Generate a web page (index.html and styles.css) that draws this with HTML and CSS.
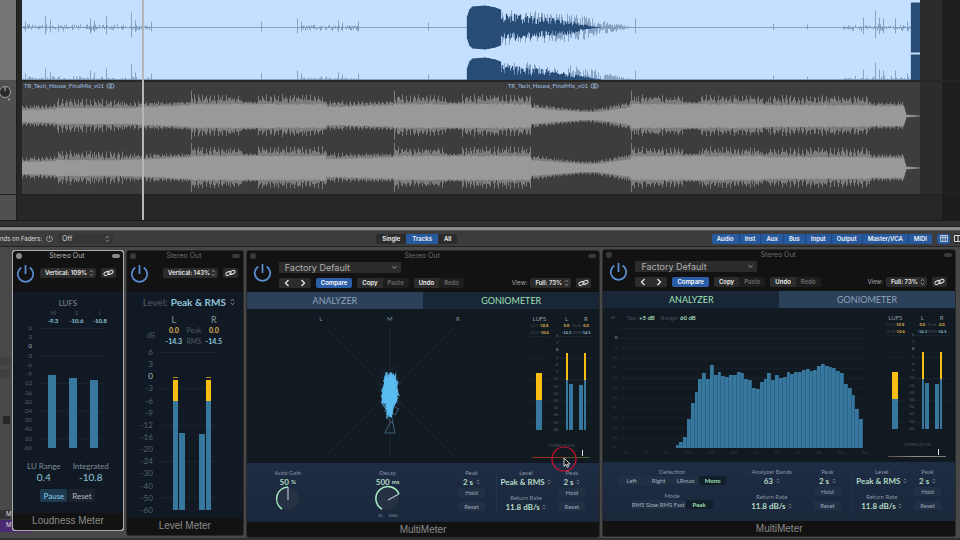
FILE: index.html
```
<!DOCTYPE html>
<html lang="en">
<head>
    <meta charset="UTF-8">
    <meta name="viewport" content="width=device-width, initial-scale=1.0">
    <title>Final Mix - Metering</title>
    <link rel="stylesheet" href="styles.css">
</head>
<body>
    <svg class="symbols" aria-hidden="true">
        <symbol id="power" viewBox="0 0 20 20">
            <path d="M5.6 3.6A8.2 8.2 0 1 0 14.4 3.6M10 1V10.5" fill="none" stroke="currentColor" stroke-width="1.8"/>
        </symbol>
        <symbol id="updown" viewBox="0 0 6 10">
            <path d="M1 4L3 1.5L5 4M1 6L3 8.5L5 6" fill="none" stroke="currentColor"/>
        </symbol>
        <symbol id="down" viewBox="0 0 8 6">
            <path d="M1.5 1.5L4 4L6.5 1.5" fill="none" stroke="currentColor"/>
        </symbol>
        <symbol id="link" viewBox="0 0 14 10">
            <rect x="1" y="3.6" width="7" height="4" rx="2" transform="rotate(-25 4.5 5.6)" fill="none" stroke="currentColor" stroke-width="1.2"/>
            <rect x="6" y="2.2" width="7" height="4" rx="2" transform="rotate(-25 9.5 4.2)" fill="none" stroke="currentColor" stroke-width="1.2"/>
        </symbol>
        <symbol id="stereo" viewBox="0 0 9 6">
            <circle cx="3.1" cy="3" r="2.2" fill="none" stroke="currentColor" stroke-width="0.8"/>
            <circle cx="5.9" cy="3" r="2.2" fill="none" stroke="currentColor" stroke-width="0.8"/>
        </symbol>
        <symbol id="prev" viewBox="0 0 6 8"><path d="M4.5 1L1.5 4L4.5 7" fill="none" stroke="currentColor" stroke-width="1.2"/></symbol>
        <symbol id="next" viewBox="0 0 6 8"><path d="M1.5 1L4.5 4L1.5 7" fill="none" stroke="currentColor" stroke-width="1.2"/></symbol>
    </svg>

    <!-- arrange area -->
    <section class="arrange">
        <div class="lane lane-selected">
            <div class="track-head"></div>
            <div class="region region-selected">
                <svg id="waveSelected" class="wave" viewBox="0 0 898 80" preserveAspectRatio="none"></svg>
            </div>
            <div class="lane-end"></div>
        </div>
        <div class="lane lane-mix">
            <div class="track-head">
                <svg class="pan" viewBox="0 0 12 16">
                    <circle cx="5" cy="7" r="5.5" fill="#2a2a2a" stroke="#a5a5a5"/>
                    <path d="M5 2V6" stroke="#bbb"/>
                    <circle cx="9" cy="14.5" r="1" fill="#aaa"/>
                </svg>
            </div>
            <div class="region region-mix">
                <div class="region-names">
                    <span>TR_Tech_House_FinalMix_v01 <svg class="stereo"><use href="#stereo"/></svg></span>
                    <span>TR_Tech_House_FinalMix_v01 <svg class="stereo"><use href="#stereo"/></svg></span>
                </div>
                <svg id="waveMix" class="wave" viewBox="0 0 898 104" preserveAspectRatio="none"></svg>
            </div>
            <div class="lane-end"></div>
        </div>
        <div class="lane lane-empty">
            <div class="track-head"></div>
            <div></div>
            <div class="lane-end"></div>
        </div>
        <div class="playhead"></div>
    </section>
    <div class="scrollbar"></div>
    <div class="splitter"></div>

    <!-- mixer toolbar -->
    <nav class="toolbar">
        <div class="faders">
            <label class="faders-label" for="sends">nds on Faders:</label>
            <svg class="mini-power"><use href="#power"/></svg>
            <span class="select sends">
                <select id="sends"><option>Off</option></select>
                <svg class="updown"><use href="#updown"/></svg>
            </span>
        </div>
        <div class="segment views">
            <button>Single</button><button class="on">Tracks</button><button>All</button>
        </div>
        <div class="filters">
            <div class="segment types">
                <button class="on">Audio</button><button class="on">Inst</button><button class="on">Aux</button><button class="on">Bus</button><button class="on">Input</button><button class="on">Output</button><button class="on">Master/VCA</button><button class="on">MIDI</button>
            </div>
            <button class="strip-view on" aria-label="Narrow strips">
                <svg viewBox="0 0 8 7"><path d="M.5 .5H7.5V6.5H.5ZM2.8 .5V6.5M5.2 .5V6.5M.5 2.5H7.5" fill="none" stroke="currentColor" stroke-width=".8"/></svg>
            </button>
            <button class="strip-view" aria-label="Wide strips">
                <svg viewBox="0 0 8 7"><path d="M.5 .5H7.5V6.5H.5ZM4 .5V6.5" fill="none" stroke="currentColor"/></svg>
            </button>
        </div>
    </nav>

    <main class="mixer">
        <div class="strip">
            <div class="slot"></div>
            <div class="slot"></div>
            <div class="slot slot-dark"></div>
            <div class="mute">M</div>
            <div class="strip-name">M</div>
        </div>

        <!-- Loudness Meter -->
        <article class="window active">
            <header class="titlebar"><i class="close"></i><h2>Stereo Out</h2><i class="pill"></i></header>
            <div class="head head-small">
                <button class="power" aria-label="Power"><svg><use href="#power"/></svg></button>
                <span class="select chip">
                    <select aria-label="Zoom"><option>Vertical: 109%</option></select>
                    <svg class="updown"><use href="#updown"/></svg>
                </span>
                <button class="link chip" aria-label="Link"><svg><use href="#link"/></svg></button>
            </div>
            <div class="screen loudness">
                <h3>LUFS</h3>
                <div class="readout">
                    <span>M<b>-9.3</b></span><span>S<b>-10.6</b></span><span>I<b>-10.8</b></span>
                </div>
                <div class="meter">
                    <ol class="scale" data-scale="meter"></ol>
                    <div class="plot">
                        <div class="bar" style="height: 61%"></div>
                        <div class="bar" style="height: 58%"></div>
                        <div class="bar" style="height: 57%"></div>
                    </div>
                </div>
                <div class="totals">
                    <span>LU Range<b>0.4</b></span><span>Integrated<b>-10.8</b></span>
                </div>
                <div class="actions">
                    <button class="on">Pause</button><button>Reset</button>
                </div>
            </div>
            <footer>Loudness Meter</footer>
        </article>

        <!-- Level Meter -->
        <article class="window">
            <header class="titlebar"><i class="close"></i><h2>Stereo Out</h2><i class="pill"></i></header>
            <div class="head head-small head-level">
                <button class="power" aria-label="Power"><svg><use href="#power"/></svg></button>
                <span class="select chip">
                    <select aria-label="Zoom"><option>Vertical: 143%</option></select>
                    <svg class="updown"><use href="#updown"/></svg>
                </span>
                <button class="link chip" aria-label="Link"><svg><use href="#link"/></svg></button>
            </div>
            <div class="screen level">
                <div class="level-mode">
                    <label for="levelMode">Level:</label>
                    <select id="levelMode"><option>Peak &amp; RMS</option></select>
                    <svg class="updown"><use href="#updown"/></svg>
                </div>
                <div class="level-values">
                    <span></span><h3>L</h3><span></span><h3>R</h3>
                    <span></span><b class="peak">0.0</b><span>Peak</span><b class="peak">0.0</b>
                    <span class="unit">dB</span><b>-14.3</b><span>RMS</span><b>-14.5</b>
                </div>
                <div class="meter">
                    <ol class="scale" data-scale="meter"></ol>
                    <div class="plot">
                        <div class="pair">
                            <div class="bar thin hold" style="height: 82%"><i class="hot" style="height: 16%"></i></div>
                            <div class="bar" style="height: 49%"></div>
                        </div>
                        <div class="pair">
                            <div class="bar" style="height: 48%"></div>
                            <div class="bar thin hold" style="height: 82%"><i class="hot" style="height: 16%"></i></div>
                        </div>
                    </div>
                </div>
            </div>
            <footer>Level Meter</footer>
        </article>

        <!-- MultiMeter, goniometer page -->
        <article class="window multi">
            <header class="titlebar"><i class="close"></i><h2>Stereo Out</h2><i class="pill"></i></header>
            <div class="head">
                <button class="power" aria-label="Power"><svg><use href="#power"/></svg></button>
                <div class="head-rows">
                    <span class="select preset">
                        <select aria-label="Preset"><option>Factory Default</option></select>
                        <svg class="down"><use href="#down"/></svg>
                    </span>
                    <div class="head-buttons">
                        <div class="segment steps"><button aria-label="Previous"><svg><use href="#prev"/></svg></button><button aria-label="Next"><svg><use href="#next"/></svg></button></div>
                        <button class="compare">Compare</button>
                        <div class="segment"><button>Copy</button><button disabled>Paste</button></div>
                        <div class="segment"><button>Undo</button><button disabled>Redo</button></div>
                        <label class="view" for="view1">View:</label>
                        <span class="select chip">
                            <select id="view1"><option>Full: 73%</option></select>
                            <svg class="updown"><use href="#updown"/></svg>
                        </span>
                        <button class="link chip" aria-label="Link"><svg><use href="#link"/></svg></button>
                    </div>
                </div>
            </div>
            <div class="tabs"><button>ANALYZER</button><button class="current">GONIOMETER</button></div>
            <div class="display">
                <svg id="gonio" class="gonio" viewBox="0 0 280 154">
                    <path class="axis" d="M78 19L206 147M206 19L78 147M142 19V147"/>
                    <text x="73" y="12">L</text><text x="142" y="12">M</text><text x="210" y="12">R</text>
                    <path class="tail" d="M136 103L141 95L151 100L147 106L141 101L137 103M143 112L137 124H147L144 108M139 108L146 116"/>
                </svg>
                <aside class="side">
                    <div class="side-head">
                        <h4>LUFS</h4><span></span><h4>L</h4><span></span><h4>R</h4>
                        <span>LU-I <b class="peak">-10.8</b></span><span></span><b class="peak">0.0</b><span>Peak</span><b class="peak">0.0</b>
                        <span>LU-S <b class="peak">-10.6</b></span><span></span><b>-14.3</b><span>RMS</span><b>-14.5</b>
                    </div>
                    <div class="meter">
                        <div class="plot"><div class="bar" style="height: 61%"><i class="hot" style="height: 47%"></i></div></div>
                        <ol class="scale" data-scale="meter"></ol>
                        <div class="plot">
                            <div class="pair">
                                <div class="bar thin" style="height: 82%"><i class="hot" style="height: 35%"></i></div>
                                <div class="bar" style="height: 49%"></div>
                            </div>
                            <div class="pair">
                                <div class="bar" style="height: 48%"></div>
                                <div class="bar thin" style="height: 82%"><i class="hot" style="height: 35%"></i></div>
                            </div>
                        </div>
                    </div>
                    <div class="correlation">CORRELATION<div class="track"><i></i></div></div>
                    <svg class="pointer" viewBox="0 0 26 26">
                        <circle cx="13" cy="13" r="12" fill="none" stroke="#c4122f" stroke-width="1.2"/>
                        <path d="M13 12V20.2L15 18.4L16.2 21.2L17.6 20.6L16.4 18H19Z" fill="#111" stroke="#fff" stroke-width=".8"/>
                    </svg>
                </aside>
            </div>
            <div class="controls">
                <div class="cell">
                    <label>Auto Gain</label><output>50 <small>%</small></output>
                    <svg class="knob" viewBox="0 0 28 28">
                        <circle cx="14" cy="14" r="11" fill="#263243"/>
                        <path d="M8 24A12 12 0 0 1 14 2" fill="none" stroke="#a5e8c0" stroke-width="1.6"/>
                        <path d="M14 2V15" stroke="#aebfc8" stroke-width="1.2"/>
                    </svg>
                </div>
                <div class="cell">
                    <label>Decay</label><output>500 <small>ms</small></output>
                    <svg class="knob" viewBox="0 0 28 28">
                        <circle cx="14" cy="14" r="11" fill="#263243"/>
                        <path d="M8 24A12 12 0 1 1 25 9" fill="none" stroke="#a5e8c0" stroke-width="1.6"/>
                        <path d="M14 15L25 9" stroke="#aebfc8" stroke-width="1.2"/>
                    </svg>
                    <span class="range"><i>10</i><i>1000</i></span>
                </div>
                <div class="cell">
                    <label for="peakA1">Peak</label>
                    <span class="value"><select id="peakA1"><option>2 s</option></select><svg class="updown"><use href="#updown"/></svg></span>
                    <button>Hold</button><button>Reset</button>
                </div>
                <div class="cell cell-line">
                    <label for="level1">Level</label>
                    <span class="value"><select id="level1"><option>Peak &amp; RMS</option></select><svg class="updown"><use href="#updown"/></svg></span>
                    <label class="second" for="rate1">Return Rate</label>
                    <span class="value"><select id="rate1"><option>11.8 dB/s</option></select><svg class="updown"><use href="#updown"/></svg></span>
                </div>
                <div class="cell">
                    <label for="peakB1">Peak</label>
                    <span class="value"><select id="peakB1"><option>2 s</option></select><svg class="updown"><use href="#updown"/></svg></span>
                    <button>Hold</button><button>Reset</button>
                </div>
            </div>
            <footer>MultiMeter</footer>
        </article>

        <!-- MultiMeter, analyzer page -->
        <article class="window multi raised">
            <header class="titlebar"><i class="close"></i><h2>Stereo Out</h2><i class="pill"></i></header>
            <div class="head">
                <button class="power" aria-label="Power"><svg><use href="#power"/></svg></button>
                <div class="head-rows">
                    <span class="select preset">
                        <select aria-label="Preset"><option>Factory Default</option></select>
                        <svg class="down"><use href="#down"/></svg>
                    </span>
                    <div class="head-buttons">
                        <div class="segment steps"><button aria-label="Previous"><svg><use href="#prev"/></svg></button><button aria-label="Next"><svg><use href="#next"/></svg></button></div>
                        <button class="compare">Compare</button>
                        <div class="segment"><button>Copy</button><button disabled>Paste</button></div>
                        <div class="segment"><button>Undo</button><button disabled>Redo</button></div>
                        <label class="view" for="view2">View:</label>
                        <span class="select chip">
                            <select id="view2"><option>Full: 73%</option></select>
                            <svg class="updown"><use href="#updown"/></svg>
                        </span>
                        <button class="link chip" aria-label="Link"><svg><use href="#link"/></svg></button>
                    </div>
                </div>
            </div>
            <div class="tabs"><button class="current">ANALYZER</button><button>GONIOMETER</button></div>
            <div class="display">
                <div class="analyzer">
                    <div class="analyzer-top"><i>dB</i><span>Top: <b>+5 dB</b></span><span>Range: <b>60 dB</b></span></div>
                    <div class="analyzer-plot">
                        <ol class="scale" data-scale="analyzer"></ol>
                        <div id="bands" class="bands"></div>
                    </div>
                    <div class="freqs"><i>16</i><i>31</i><i>63</i><i>125</i><i>250</i><i>500</i><i>1 k</i><i>2 k</i><i>4 k</i><i>8 k</i><i>16 k</i><i>20k</i></div>
                </div>
                <aside class="side">
                    <div class="side-head">
                        <h4>LUFS</h4><span></span><h4>L</h4><span></span><h4>R</h4>
                        <span>LU-I <b class="peak">-10.8</b></span><span></span><b class="peak">0.0</b><span>Peak</span><b class="peak">0.0</b>
                        <span>LU-S <b class="peak">-10.6</b></span><span></span><b>-14.3</b><span>RMS</span><b>-14.5</b>
                    </div>
                    <div class="meter">
                        <div class="plot"><div class="bar" style="height: 61%"><i class="hot" style="height: 47%"></i></div></div>
                        <ol class="scale" data-scale="meter"></ol>
                        <div class="plot">
                            <div class="pair">
                                <div class="bar thin" style="height: 82%"><i class="hot" style="height: 35%"></i></div>
                                <div class="bar" style="height: 49%"></div>
                            </div>
                            <div class="pair">
                                <div class="bar" style="height: 48%"></div>
                                <div class="bar thin" style="height: 82%"><i class="hot" style="height: 35%"></i></div>
                            </div>
                        </div>
                    </div>
                    <div class="correlation pale">CORRELATION<div class="track"><i></i></div></div>
                </aside>
            </div>
            <div class="controls controls-analyzer">
                <div class="cell">
                    <label>Detection</label>
                    <div class="choices"><button>Left</button><button>Right</button><button>LRmax</button><button class="on">Mono</button></div>
                    <label class="mode">Mode</label>
                    <div class="choices"><button>RMS Slow</button><button>RMS Fast</button><button class="on">Peak</button></div>
                </div>
                <div class="cell">
                    <label for="bandCount">Analyzer Bands</label>
                    <span class="value"><select id="bandCount"><option>63</option></select><svg class="updown"><use href="#updown"/></svg></span>
                    <label class="second" for="rateA">Return Rate</label>
                    <span class="value"><select id="rateA"><option>11.8 dB/s</option></select><svg class="updown"><use href="#updown"/></svg></span>
                </div>
                <div class="cell">
                    <label for="peakA2">Peak</label>
                    <span class="value"><select id="peakA2"><option>2 s</option></select><svg class="updown"><use href="#updown"/></svg></span>
                    <button>Hold</button><button>Reset</button>
                </div>
                <div class="cell cell-line">
                    <label for="level2">Level</label>
                    <span class="value"><select id="level2"><option>Peak &amp; RMS</option></select><svg class="updown"><use href="#updown"/></svg></span>
                    <label class="second" for="rate2">Return Rate</label>
                    <span class="value"><select id="rate2"><option>11.8 dB/s</option></select><svg class="updown"><use href="#updown"/></svg></span>
                </div>
                <div class="cell">
                    <label for="peakB2">Peak</label>
                    <span class="value"><select id="peakB2"><option>2 s</option></select><svg class="updown"><use href="#updown"/></svg></span>
                    <button>Hold</button><button>Reset</button>
                </div>
            </div>
            <footer>MultiMeter</footer>
        </article>
    </main>

    <script src="script.js"></script>
</body>
</html>
```
FILE: styles.css
```
* {
    box-sizing: border-box;
}
body {
    margin: 0;
    min-height: 100vh;
    display: flex;
    flex-direction: column;
    overflow-x: hidden;
    background-color: #2a2a2a;
    color: #ddd;
    font-family: Inter, "Liberation Sans", sans-serif;
    font-size: 7px;
    line-height: 8px;
}
h2, h3, h4, ol {
    margin: 0;
    padding: 0;
    font-size: inherit;
    font-weight: normal;
    list-style: none;
}
i {
    font-style: normal;
}
svg {
    display: block;
    flex: none;
}
button, select {
    margin: 0;
    padding: 0;
    border: 0;
    background: none;
    color: inherit;
    font: inherit;
    appearance: none;
}
.symbols {
    position: absolute;
    width: 0;
    height: 0;
}

/* arrange area */
.arrange {
    position: relative;
    background: #282828;
}
.lane {
    display: grid;
    grid-template-columns: 17px 1fr 40px;
    column-gap: 5px;
    margin-right: -5px;
}
.track-head {
    background: #505050;
    border-right: 1px solid #1c1c1c;
    overflow: hidden;
}
.lane-selected .track-head {
    background: #757575;
}
.lane-selected, .lane-mix {
    background: #262626;
}
.lane-end {
    margin-left: -5px;
    background: linear-gradient(90deg, #2c2c2c 49%, #1f1f1f 49%);
}
.lane-empty {
    height: 26px;
    border-top: 1px solid #202020;
    background: #272727;
}
.lane-empty .lane-end {
    background: linear-gradient(90deg, #272727 49%, #1d1d1d 49%);
}
.lane-mix {
    padding-top: 2px;
}
.lane-mix .track-head {
    margin-top: -2px;
}
.region {
    overflow: hidden;
}
.region-selected {
    background: #c4dfff;
}
.region-mix {
    background: #3d3d3d;
}
.region-names {
    display: grid;
    grid-template-columns: 54% 46%;
    height: 8px;
    padding-left: 2px;
    color: #9dbfe4;
    font-family: Lato, sans-serif;
    font-size: 6px;
}
.region-names span {
    display: flex;
    align-items: center;
    gap: 2px;
}
.stereo {
    width: 9px;
    height: 6px;
}
.wave {
    width: 100%;
}
#waveSelected {
    height: 80px;
}
#waveMix {
    height: 104px;
}
.pan {
    width: 12px;
    height: 16px;
    margin-top: 5px;
}
.playhead {
    position: absolute;
    top: 0;
    bottom: 0;
    left: 14.8%;
    width: 2px;
    background: #b4b6b8;
}
.scrollbar {
    height: 7px;
    background: #303030;
    border-top: 1px solid #1c1c1c;
    border-bottom: 1px solid #1c1c1c;
}
.splitter {
    height: 4px;
    border-bottom: 1px solid #555;
    background: #8a8a8a;
}

/* toolbar */
.toolbar {
    display: grid;
    grid-template-columns: 39.2% auto 1fr;
    align-items: center;
    height: 16px;
    background: #3c3c3c;
    border-bottom: 1px solid #232323;
    overflow: hidden;
}
.faders, .filters {
    display: flex;
    align-items: center;
}
.faders-label {
    font-size: 6px;
    white-space: nowrap;
}
.mini-power {
    width: 7px;
    height: 7px;
    margin: 0 5px 0 4px;
}
.select {
    display: flex;
    align-items: center;
}
.select select {
    flex: 1;
    min-width: 0;
}
.updown {
    width: 5px;
    height: 8px;
    color: #999;
}
.sends {
    width: 55px;
    height: 10px;
    padding: 0 3px 0 4px;
    background: #353535;
}
.segment {
    display: flex;
    border-radius: 2px;
    overflow: hidden;
}
.segment button {
    height: 10px;
    padding: 0 5px;
    background: #2c2c2c;
    color: #f2f2f2;
    font-size: 6px;
    font-weight: 600;
}
.segment button.on {
    background: #27599f;
}
.views button {
    padding: 0 6px;
}
.filters {
    justify-content: flex-end;
    gap: 5px;
    margin-right: -2px;
}
.types button + button {
    border-left: 1px solid #1d4580;
}
.strip-view {
    display: grid;
    place-items: center;
    width: 13px;
    height: 10px;
    border-radius: 2px;
    background: #2c2c2c;
    color: #ddd;
}
.strip-view svg {
    width: 8px;
    height: 7px;
}
.strip-view.on {
    background: #27599f;
}
.filters .strip-view:last-child {
    width: 8px;
    margin-left: -1px;
}

/* mixer with floating plug-in windows */
.mixer {
    flex: 1;
    display: grid;
    grid-template-columns: 10px 112fr 118fr 355fr 354fr;
    column-gap: 2px;
    align-items: start;
    padding: 3px 4px 0 0;
    background: #484848;
    border-bottom: 2px solid #303030;
}
.strip {
    padding-top: 107px;
}
.slot {
    height: 9px;
    margin-bottom: 3px;
    background: #404040;
}
.slot-dark {
    height: 8px;
    margin: 38px 0 86px 3px;
    background: #262626;
}
.mute {
    height: 9px;
    padding-left: 6px;
    background: #333;
    font-size: 6px;
    white-space: nowrap;
}
.strip-name {
    width: 32px;
    height: 12px;
    margin-top: 1px;
    padding-left: 6px;
    background: #4b2a73;
    font-size: 6px;
    line-height: 10px;
}
.window {
    position: relative;
    min-width: 0;
    border: 1px solid #2a2a2a;
    border-radius: 3px;
    overflow: hidden;
    background: #121212;
    color: #7f8a94;
}
.window.active {
    border: 1px solid #fff;
    outline: 1px solid #aaa;
    outline-offset: -1px;
}
.window.raised {
    margin-top: -1px;
}
.titlebar {
    display: flex;
    align-items: center;
    justify-content: space-between;
    height: 10px;
    padding: 0 3px;
    color: #6d6d6d;
    font-size: 7px;
}
.active .titlebar {
    color: #b5b5b5;
}
.close {
    width: 6px;
    height: 6px;
    border-radius: 3px;
    background: #3b3b3b;
}
.pill {
    width: 8px;
    height: 4px;
    border-radius: 2px;
    background: #3b3b3b;
}
.active .close, .active .pill {
    background: #8b8b8b;
}
.head {
    display: flex;
    align-items: flex-start;
    gap: 7px;
    height: 31px;
    padding: 1px 8px 0 6px;
}
.power {
    color: #5b8fd6;
}
.power svg {
    width: 19px;
    height: 19px;
}
.head .power {
    margin-top: 1px;
}
.head-small {
    align-items: flex-start;
    gap: 5px;
    padding: 2px 7px 0 3px;
}
.head-small .chip {
    margin-top: 5px;
}
.head-small .select {
    flex: 1;
}
.head-level .select {
    margin-left: 9px;
}
.chip {
    height: 10px;
    padding: 0 2px 0 5px;
    border-radius: 2px;
    background: #2b2b2b;
    color: #e8e8e8;
    font-size: 6px;
    font-weight: 600;
}
.link {
    width: 15px;
    padding: 0 2px;
}
.link svg {
    width: 11px;
    height: 8px;
}
.head-rows {
    flex: 1;
    display: flex;
    flex-direction: column;
    gap: 5px;
}
.preset {
    width: 39%;
    height: 11px;
    padding: 0 3px 0 6px;
    border-radius: 1px;
    background: #2c2c2c;
    color: #b0b0b0;
    font-size: 9px;
    line-height: 11px;
}
.down {
    width: 7px;
    height: 5px;
}
.head-buttons {
    display: flex;
    align-items: center;
    gap: 5px;
}
.head-buttons .segment button, .compare {
    height: 10px;
    padding: 0 5px;
    font-size: 6px;
    font-weight: 600;
}
.head-buttons .segment button:disabled {
    background: #1e1e1e;
    color: #6b6b6b;
}
.head-buttons .steps button {
    width: 16px;
}
.steps svg {
    width: 6px;
    height: 8px;
}
.compare {
    border-radius: 2px;
    background: #2b5ea6;
    color: #fff;
}
.view {
    margin-left: auto;
    margin-right: -2px;
    color: #a8a8a8;
    font-size: 6px;
}
.head-buttons .select {
    width: 41px;
}
.window footer {
    height: 17px;
    color: #8a8a8a;
    font-family: "Liberation Sans", sans-serif;
    font-size: 10px;
    line-height: 15px;
    text-align: center;
}
.multi footer {
    height: 15px;
}

/* meters */
.screen {
    padding: 7px 8px 0;
    background: #111a24;
    font-family: Lato, "Open Sans", sans-serif;
    text-align: center;
}
.scale {
    display: flex;
    flex-direction: column;
    justify-content: space-between;
    margin: -4px 0;
    color: #55616b;
    font-size: 6px;
    text-align: right;
}
.scale li {
    height: 8px;
}
.scale .zero {
    color: #b4bcc4;
}
.meter {
    display: flex;
}
.plot {
    display: flex;
    align-items: flex-end;
    background: linear-gradient(#1a242e 1px, transparent 1px) 0 0 / 100% 23%;
}
.bar {
    width: 8px;
    background: #38789e;
}
.hot {
    display: block;
    background: #fabd14;
}
.hold {
    box-shadow: 0 -2px #111a24, 0 -3px #b98f1c;
}
.pair {
    display: flex;
    align-items: flex-end;
    gap: 1px;
    height: 100%;
}
.loudness h3 {
    font-size: 8px;
}
.readout {
    display: flex;
    justify-content: space-between;
    margin: 2px 7px 3px 24px;
    color: #4c5761;
    font-size: 6px;
}
.readout span {
    width: 20px;
    margin: 0 -2px;
}
.readout b, .totals b {
    display: block;
}
.readout b, .level-values b, .side-head b {
    color: #8fc4dc;
}
.loudness .scale {
    width: 11px;
}
.loudness .plot {
    flex: 1;
    justify-content: space-between;
    height: 120px;
    margin: 0 9px 0 8px;
    padding: 0 8px;
}
.totals {
    display: flex;
    justify-content: space-around;
    margin: 13px 0 0;
    font-size: 8px;
    line-height: 10px;
}
.totals b {
    color: #8fc4dc;
    font-size: 10px;
    font-weight: normal;
    line-height: 12px;
}
.actions {
    display: flex;
    justify-content: center;
    gap: 1px;
    padding: 6px 6px 11px;
}
.actions button {
    width: 27px;
    height: 13px;
    border-radius: 2px;
    background: #1b232e;
    color: #b0b8c0;
    font-size: 8px;
}
.actions .on {
    background: #1d3a50;
    color: #8fd0ec;
}
.level {
    padding-top: 4px;
    padding-bottom: 8px;
}
.level-mode {
    display: flex;
    align-items: center;
    justify-content: flex-end;
    gap: 3px;
    font-size: 10px;
    line-height: 12px;
}
.level-mode label {
    color: #4d5a66;
}
.level-mode select {
    color: #8fc4dc;
    font-weight: bold;
}
.level-values {
    display: grid;
    grid-template-columns: 14px 24px 16px 24px;
    justify-content: center;
    align-items: center;
    margin: 6px 0 5px;
    padding-left: 4px;
    color: #4c5761;
    line-height: 11px;
}
.level-values h3 {
    color: #8a959f;
    font-size: 9px;
}
.peak, .level-values .peak, .side-head .peak {
    color: #e0b955;
}
.unit {
    margin-top: -12px;
    margin-left: -8px;
}
.level .scale {
    width: 18px;
    font-size: 8px;
}
.level .plot {
    flex: 1;
    justify-content: space-between;
    height: 158px;
    margin: 0 17px 0 6px;
    padding: 0 7px 0 14px;
}
.level .bar {
    width: 6px;
}
.level .thin {
    width: 5px;
}

/* MultiMeter */
.tabs {
    display: grid;
    grid-template-columns: 1fr 1fr;
    font-family: Lato, "Open Sans", sans-serif;
    font-size: 9px;
}
.tabs button {
    height: 17px;
    background: #2b4059;
    color: #8fa4bb;
}
.tabs .current {
    background: #182638;
    color: #9fe0b4;
}
.display {
    display: grid;
    grid-template-columns: 282fr 66fr;
    height: 154px;
    padding-right: 5px;
    background: #111921;
    font-family: Lato, "Open Sans", sans-serif;
}
.gonio {
    width: 100%;
    height: 154px;
}
.gonio text {
    fill: #86909a;
    font-size: 6px;
    text-anchor: middle;
}
.axis {
    fill: none;
    stroke: #202a33;
}
.tail {
    fill: none;
    stroke: #52809c;
    stroke-width: 0.7;
}
.cloud {
    fill: none;
    stroke: #5cbcf2;
    stroke-width: 0.8;
}
.halo {
    fill: none;
    stroke: #1f3546;
    stroke-width: 0.5;
}
.side {
    position: relative;
    padding: 6px 1px 0;
}
.side-head {
    display: grid;
    grid-template-columns: 20px 11px 12px 7px 13px;
    align-items: center;
    height: 21px;
    color: #46515b;
    font-size: 4px;
    line-height: 6px;
    text-align: center;
    white-space: nowrap;
}
.side-head h4 {
    color: #919ba4;
    font-size: 6px;
}
.side .plot {
    justify-content: center;
    height: 94px;
}
.side .plot:first-child {
    width: 20px;
}
.side .plot:last-child {
    flex: 1;
    justify-content: space-between;
    padding: 0 7px 0 8px;
}
.side .bar {
    width: 6px;
}
.side .pair .bar {
    width: 4px;
}
.side .pair .thin {
    width: 2px;
}
.side .scale {
    width: 9px;
    margin: -3px 0;
    font-size: 4px;
    line-height: 6px;
}
.side .scale li {
    height: 6px;
}
.correlation {
    margin: 12px 3px 0;
    color: #46515b;
    font-size: 4px;
    text-align: center;
}
.track {
    height: 8px;
    padding-left: 86%;
    border-bottom: 1px solid;
    border-image: linear-gradient(90deg, #a32a20, #8a3a20 45%, #3e6b2a) 1;
}
.pale .track {
    border-image: linear-gradient(90deg, #5e4a4c, #9b8c8c 50%, #6f7a76) 1;
}
.track i {
    display: block;
    width: 1px;
    height: 6px;
    background: #e6e6e6;
}
.pointer {
    position: absolute;
    right: 17px;
    bottom: -9px;
    z-index: 1;
    width: 26px;
    height: 26px;
}
.controls {
    display: grid;
    grid-template-columns: 82fr 118fr 50fr 58fr 35fr;
    height: 59px;
    padding: 6px 10px 0 0;
    background: linear-gradient(#1e2d45, #1a273b);
    color: #8793a2;
    font-family: Lato, "Open Sans", sans-serif;
    font-size: 6px;
}
.controls-analyzer {
    grid-template-columns: 138fr 62fr 50fr 58fr 35fr;
}
.cell {
    display: flex;
    flex-direction: column;
    align-items: center;
    white-space: nowrap;
}
.cell-line {
    margin-bottom: 8px;
    border-left: 1px solid #22334a;
}
.value, .cell output {
    display: flex;
    align-items: center;
    gap: 2px;
    height: 9px;
    color: #b5dcc4;
    font-size: 8px;
    font-weight: bold;
}
.value .updown {
    width: 4px;
    height: 6px;
}
.cell output small {
    font-size: 6px;
}
.cell > button {
    width: 27px;
    height: 9px;
    margin-top: 2px;
    border-radius: 1px;
    background: #223046;
    color: #9ba6b3;
}
.cell > button + button {
    margin-top: 5px;
}
.second {
    margin-top: 8px;
}
.knob {
    width: 28px;
    height: 28px;
    margin-top: -1px;
}
.range {
    display: flex;
    gap: 6px;
    margin-top: -1px;
    font-size: 4px;
}
.choices {
    display: flex;
    background: #223046;
}
.choices button {
    width: 27px;
    height: 9px;
    color: #a3adba;
}
.choices .on {
    background: #131e2b;
    color: #9fe0b4;
    font-weight: bold;
}
.mode {
    margin-top: 7px;
}

/* analyzer */
.analyzer {
    display: flex;
    flex-direction: column;
    padding: 6px 16px 0 7px;
}
.analyzer-top {
    display: flex;
    gap: 6px;
    height: 14px;
    color: #43505c;
    font-size: 6px;
}
.analyzer-top b {
    color: #a5d8b8;
}
.analyzer-top i {
    width: 10px;
    font-size: 4px;
}
.analyzer-plot {
    display: flex;
    gap: 4px;
}
.analyzer-plot .scale {
    width: 7px;
    color: #36424d;
    font-size: 4px;
}
.bands {
    flex: 1;
    display: flex;
    align-items: flex-end;
    height: 120px;
    padding: 0 2% 0 21%;
    background: linear-gradient(#18222c 1px, transparent 1px) 0 0 / 100% 8.3%;
}
.bands i {
    flex: 1;
    border-right: 1px solid #2c6387;
    background: #38789e;
}
.freqs {
    display: flex;
    justify-content: space-between;
    margin: 1px 0 0 13px;
    color: #36424d;
    font-size: 4px;
}
```
FILE: script.js
```
const SCALES = {
    meter: [6, 3, 0, -3, -6, -9, -12, -16, -20, -24, -30, -40, -50, -60],
    analyzer: [5, 0, -5, -10, -15, -20, -25, -30, -35, -40, -45, -50, -55]
};

// band levels in px above the floor of a 120 px plot
const BANDS = [3, 6, 11, 29, 45, 56, 69, 75, 69, 83, 73, 76, 72, 71, 73, 73, 76, 75, 69, 68,
    60, 59, 66, 69, 75, 68, 73, 70, 71, 76, 74, 76, 76, 78, 79, 77, 78, 82, 84, 82, 81, 80,
    77, 75, 64, 60, 53, 39, 29];

// [x, solid height, peak height], linear between the points
const MIX = [[0, 6, 10], [33, 7, 11], [34, 8, 16], [102, 8, 15], [103, 8, 13], [168, 11, 14],
    [169, 12, 20], [219, 12, 19], [220, 12, 14], [235, 12, 14], [236, 12, 20], [303, 12, 20],
    [304, 9, 14], [371, 11, 14], [372, 12, 20], [423, 12, 19], [424, 12, 14], [439, 12, 14],
    [440, 12, 20], [508, 12, 20], [509, 8, 12], [560, 4, 6], [575, 4, 7], [608, 9, 14], [609, 12, 20],
    [660, 12, 19], [661, 12, 14], [676, 12, 14], [677, 12, 20], [735, 12, 19], [744, 11, 15],
    [745, 11, 19], [847, 11, 19], [848, 10, 13], [881, 10, 13], [884, 1, 1], [898, 0, 0]];

const HIT = [[444, 0, 0], [445, 12, 12], [447, 18, 18], [450, 21, 21], [463, 22, 22], [473, 20, 20],
    [478, 18, 18], [479, 12, 19], [510, 9, 17], [540, 7, 15], [560, 3, 13], [570, 1, 11], [580, 0, 7],
    [600, 0, 3], [612, 0, 0], [888, 0, 0], [889, 25, 25], [898, 25, 25]];

const SPIKES = [[3, 6], [23, 11], [28, 8], [68, 9], [72, 7], [84, 11], [109, 15], [113, 7], [129, 6],
    [239, 6], [275, 9], [279, 6], [316, 7], [320, 5], [336, 6], [406, 5], [613, 9], [751, 4], [785, 3],
    [841, 10], [853, 17], [857, 10], [861, 9], [873, 9], [885, 6]];

const QUIET = [[0, 130], [276, 338], [821, 889]];

let seed = 7;
function rand() {
    seed = (seed * 16807) % 2147483647;
    return seed / 2147483647;
}

function at(points, x) {
    let i = 1;
    while (i < points.length - 1 && points[i][0] < x) i++;
    const [a, b] = [points[i - 1], points[i]];
    const t = Math.min(1, Math.max(0, (x - a[0]) / (b[0] - a[0])));
    return [a[1] + (b[1] - a[1]) * t, a[2] + (b[2] - a[2]) * t];
}

function addPath(svg, d, attrs) {
    const path = document.createElementNS('http://www.w3.org/2000/svg', 'path');
    path.setAttribute('d', d);
    Object.keys(attrs).forEach(key => path.setAttribute(key, attrs[key]));
    svg.appendChild(path);
}

function line(x, mid, up, down) {
    return `M${x + 0.5} ${(mid - up).toFixed(1)}V${(mid + down).toFixed(1)}`;
}

function drawMix(svg) {
    [26, 78].forEach(mid => {
        let core = '', peaks = '';
        for (let x = 0; x < 898; x++) {
            const [solid, peak] = at(MIX, x);
            const beat = x % 4 === 0 ? 0.8 + rand() * 0.4 : x % 2 ? 0.2 + rand() * 0.6 : rand() * 0.8;
            let top = solid + (peak - solid) * beat + 0.5;
            if (x === 169 || x === 372 || x === 609) top = 25;
            const s = solid * (0.92 + rand() * 0.12);
            core += line(x, mid, s, s);
            peaks += line(x, mid, top, top * 0.95);
        }
        addPath(svg, peaks, { stroke: '#7c7c7c', 'stroke-width': 1 });
        addPath(svg, core, { stroke: '#999', 'stroke-width': 1.2 });
    });
}

function drawSelected(svg) {
    [27.5, 79.5].forEach(mid => {
        let core = '', peaks = `M0 ${mid}H898`;
        for (let x = 0; x < 898; x++) {
            const [solid, peak] = at(HIT, x);
            const flat = solid === peak;
            if (solid > 0) {
                const up = flat ? solid : solid * (0.4 + rand() * 0.9);
                const down = flat ? solid : solid * (0.4 + rand() * 0.9);
                core += line(x, mid, up, down);
            }
            if (!flat) {
                peaks += line(x, mid, peak * rand(), peak * rand());
            }
            if (QUIET.some(q => x >= q[0] && x < q[1])) {
                peaks += line(x, mid, rand() * rand() * 4, rand() * rand() * 4);
            }
        }
        SPIKES.forEach(([x, h]) => { peaks += line(x, mid, h, h * 0.65); });
        addPath(svg, peaks, { stroke: '#7793b5', 'stroke-width': 0.8 });
        addPath(svg, core, { stroke: '#274c75', 'stroke-width': 1.3 });
    });
}

function drawGonio(svg) {
    let halo = '', cloud = 'M142 66';
    for (let i = 0; i < 60; i++) {
        const a = rand() * Math.PI * 2;
        const r = 8 + rand() * 12;
        halo += `M142 80L${(142 + Math.cos(a) * r * 0.8).toFixed(1)} ${(78 + Math.sin(a) * r * 1.3).toFixed(1)}`;
    }
    for (let i = 0; i < 480; i++) {
        const y = (rand() + rand()) / 2 * 50 - 25;
        const w = y > 10 ? 4 : 10 * Math.sqrt(1 - Math.pow((y + 5) / 25, 2));
        cloud += `L${(142 + (rand() + rand() - 1) * (w || 1)).toFixed(1)} ${(86 + y).toFixed(1)}`;
        if (i % 6 === 0) cloud += `M142 ${(86 + y).toFixed(1)}`;
    }
    addPath(svg, halo, { class: 'halo' });
    addPath(svg, cloud.replace(/NaN/g, '142'), { class: 'cloud' });
}

document.querySelectorAll('[data-scale]').forEach(list => {
    list.innerHTML = SCALES[list.dataset.scale]
        .map(n => `<li${n === 0 ? ' class="zero"' : ''}>${n}</li>`).join('');
});

document.getElementById('bands').innerHTML = BANDS
    .map(h => `<i style="height: ${(h / 1.2).toFixed(1)}%"></i>`).join('');

drawSelected(document.getElementById('waveSelected'));
drawMix(document.getElementById('waveMix'));
drawGonio(document.getElementById('gonio'));
```
